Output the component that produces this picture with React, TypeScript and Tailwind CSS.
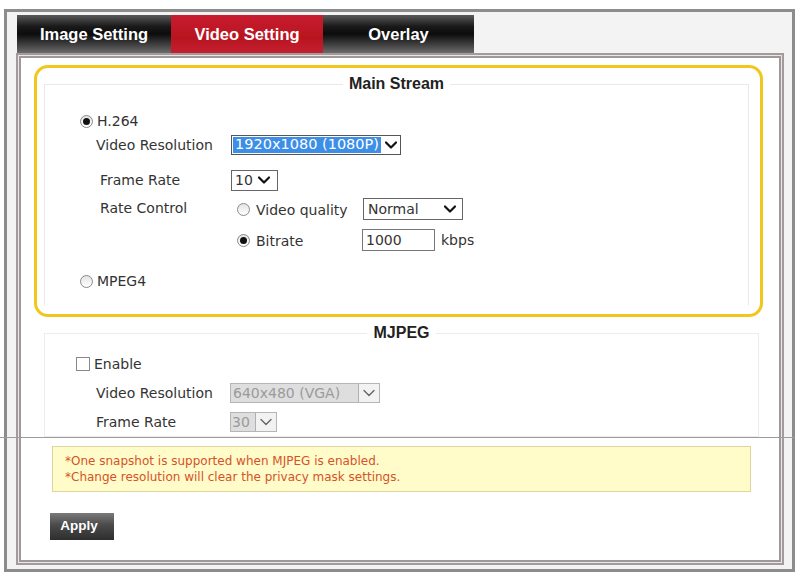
import React from "react";

const Chevron = ({ color = "#111", w = 2.2 }: { color?: string; w?: number }) => (
  <svg width="14" height="10" viewBox="0 0 14 10">
    <path d="M2 2.5 L7 7.5 L12 2.5" fill="none" stroke={color} strokeWidth={w} strokeLinecap="round" strokeLinejoin="round" />
  </svg>
);

const Radio = ({ checked }: { checked?: boolean }) => (
  <span className="inline-flex h-[13px] w-[13px] shrink-0 items-center justify-center rounded-full border border-[#8a8a8a] bg-gradient-to-b from-[#e4e4e4] to-white">
    {checked && <span className="h-[7px] w-[7px] rounded-full bg-[#111]" />}
  </span>
);

const tabBg =
  "bg-[linear-gradient(to_bottom,#5a5a5a_0%,#1a1a1a_30%,#0c0c0c_50%,#3a3a3a_75%,#6c6c6c_100%)]";

export default function App() {
  return (
    <div className="relative h-[576px] w-[798px] overflow-hidden bg-white font-['DejaVu_Sans',sans-serif] text-[14px] text-[#333]">
      <div className="ml-[4px] mt-[9px] flex h-[563px] w-[791px] flex-col border-[3px] border-[#8c8c8c] bg-[#f3f3f3]">
        {/* Tabs */}
        <div className="ml-[10px] mt-[3px] flex h-[38px] font-['Liberation_Sans',sans-serif] text-[16.5px] font-bold text-white">
          <div className={`flex w-[154px] items-center justify-center ${tabBg}`}>Image Setting</div>
          <div className="flex w-[152px] items-center justify-center bg-[linear-gradient(to_bottom,#c81c30_0%,#b8141f_60%,#c42032_100%)]">
            Video Setting
          </div>
          <div className={`flex w-[151px] items-center justify-center ${tabBg}`}>Overlay</div>
        </div>

        {/* Panel */}
        <div className="mb-[4px] ml-[9px] mr-[8px] flex-1 border-[2px] border-[#a39a9b] bg-[#f1e2e3] p-[1px]">
          <div className="flex h-full flex-col border-[2px] border-[#9a9a9a] bg-white">
            {/* Main stream yellow box */}
            <div className="ml-[13px] mr-[16px] mt-[7px] h-[252px] rounded-[14px] border-[3px] border-[#f1c71c] pl-[7px] pr-[11px] pt-[7px]">
              <fieldset className="h-[231px] border border-[#e9e9e9] border-b-transparent">
                <legend className="mx-auto px-[6px] font-['Liberation_Sans',sans-serif] text-[16px] font-bold leading-[18px] text-[#222]">
                  Main Stream
                </legend>
                <div className="flex flex-col pt-[16px]">
                  <div className="ml-[35px] flex h-[24px] items-center gap-[4px]">
                    <Radio checked />
                    <span>H.264</span>
                  </div>
                  <div className="ml-[51px] flex h-[24px] items-center">
                    <span className="w-[135px]">Video Resolution</span>
                    <div className="flex h-[20px] w-[170px] items-center border border-[#555] p-[1px]">
                      <span className="flex h-full items-center bg-[#3d8ee6] px-[2px] text-[14.5px] text-white">1920x1080 (1080P)</span>
                      <span className="ml-[3px]">
                        <Chevron />
                      </span>
                    </div>
                  </div>
                  <div className="ml-[55px] mt-[11px] flex h-[24px] items-center">
                    <span className="w-[131px]">Frame Rate</span>
                    <div className="flex h-[21px] w-[47px] items-center border border-[#666] pl-[3px] text-[14px]">
                      <span>10</span>
                      <span className="ml-[4px]">
                        <Chevron />
                      </span>
                    </div>
                  </div>
                  <div className="ml-[55px] mt-[6px] flex h-[22px] items-center">
                    <span className="w-[137px] -translate-y-[1px]">Rate Control</span>
                    <Radio />
                    <span className="ml-[6px] w-[107px] translate-y-[1px] text-[14px]">Video quality</span>
                    <div className="flex h-[22px] w-[100px] items-center justify-between border border-[#666] pl-[4px] pr-[5px] text-[14px]">
                      <span>Normal</span>
                      <Chevron />
                    </div>
                  </div>
                  <div className="ml-[192px] mt-[9px] flex h-[22px] items-center">
                    <Radio checked />
                    <span className="ml-[6px] w-[106px] translate-y-[1px] text-[14px]">Bitrate</span>
                    <div className="flex h-[22px] w-[73px] items-center border border-[#777] pl-[3px] text-[14px]">1000</div>
                    <span className="ml-[6px] text-[14px]">kbps</span>
                  </div>
                  <div className="ml-[35px] mt-[19px] flex h-[22px] items-center gap-[4px]">
                    <Radio />
                    <span>MPEG4</span>
                  </div>
                </div>
              </fieldset>
            </div>

            {/* MJPEG */}
            <fieldset className="ml-[23px] mr-[20px] mt-[7px] h-[113px] border border-[#ececec]">
              <legend className="mx-auto px-[6px] font-['Liberation_Sans',sans-serif] text-[16px] font-bold leading-[18px] text-[#222]">
                MJPEG
              </legend>
              <div className="flex flex-col">
                <div className="ml-[31px] mt-[12px] flex h-[20px] items-center gap-[4px]">
                  <span className="h-[14px] w-[14px] border border-[#888] bg-white" />
                  <span>Enable</span>
                </div>
                <div className="ml-[51px] mt-[9px] flex h-[20px] items-center">
                  <span className="w-[134px]">Video Resolution</span>
                  <div className="flex h-[20px] w-[150px] items-center border border-[#b5b5b5] bg-[#dedede]">
                    <span className="w-[127px] pl-[2px] text-[14px] text-[#9a9a9a]">640x480 (VGA)</span>
                    <span className="flex h-full w-[21px] items-center justify-center border-l border-[#b0b0b0] bg-[#f2f2f2]">
                      <Chevron color="#666" w={1.4} />
                    </span>
                  </div>
                </div>
                <div className="ml-[51px] mt-[9px] flex h-[20px] items-center">
                  <span className="w-[134px]">Frame Rate</span>
                  <div className="flex h-[20px] w-[47px] items-center border border-[#b5b5b5] bg-[#dedede]">
                    <span className="w-[24px] pl-[1px] text-[14px] text-[#9a9a9a]">30</span>
                    <span className="flex h-full w-[21px] items-center justify-center border-l border-[#b0b0b0] bg-[#f2f2f2]">
                      <Chevron color="#666" w={1.4} />
                    </span>
                  </div>
                </div>
              </div>
            </fieldset>

            {/* Note */}
            <div className="ml-[31px] mr-[28px] mt-[9px] h-[46px] border border-[#ddd49e] bg-[#fffcc9] pl-[12px] pt-[6px] text-[12px] leading-[16px] text-[#d6522a]">
              <div>*One snapshot is supported when MJPEG is enabled.</div>
              <div>*Change resolution will clear the privacy mask settings.</div>
            </div>

            {/* Apply */}
            <div className="ml-[29px] mt-[21px]">
              <button className="flex h-[27px] w-[64px] items-center justify-center bg-[linear-gradient(to_bottom,#7a7a7a_0%,#4a4a4a_45%,#2e2e2e_100%)] pr-[6px] font-['Liberation_Sans',sans-serif] text-[13.5px] font-bold text-white">
                Apply
              </button>
            </div>
          </div>
        </div>
      </div>
      <div className="absolute left-0 top-[437px] h-px w-[795px] bg-[#9c9c9c]" />
    </div>
  );
}
